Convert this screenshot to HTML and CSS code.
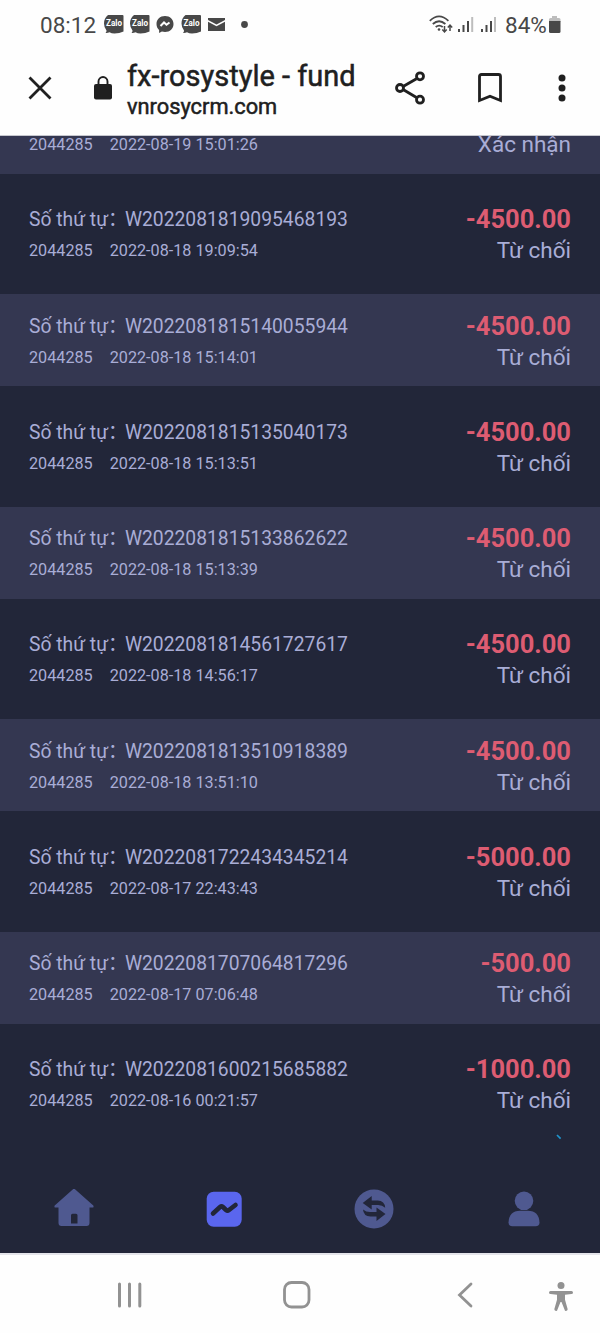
FILE: index.html
```
<!DOCTYPE html>
<html lang="vi">
  <head>
    <meta charset="UTF-8" />
    <meta name="viewport" content="width=device-width, initial-scale=1.0" />
    <title>fx-rosystyle - fund</title>
    <link rel="stylesheet" href="styles.css">
  </head>
  <body>
    <header>
      <div class="status-bar">
        <span class="clock">08:12</span>
        <svg class="notices" width="146" height="22" viewBox="0 0 146 22">
          <defs>
            <g id="zalo">
              <path d="M4 1h14.500q1 0 1 1v15.500q-4 2-9 2-3 0-5-1.200-2 1-4 .7 1.200-1.200 1-2.500Q0 13.500 0 9.500 0 4 4 1z" fill="#484848" />
              <text x="10" y="12.300" text-anchor="middle" textLength="16" lengthAdjust="spacingAndGlyphs">Zalo</text>
            </g>
          </defs>
          <use href="#zalo" x="0" y="0" />
          <use href="#zalo" x="26" y="0" />
          <path d="M61 2c-5 0-8.500 3.500-8.500 8 0 2.500 1 4.500 2.600 6v3l2.800-1.400c1 .3 2 .4 3.100.4 5 0 8.500-3.500 8.500-8s-3.500-8-8.500-8z" fill="#484848" />
          <path d="M56.500 12l3.500-3.500 2.500 2.300 3-2.300" fill="none" stroke="#fff" stroke-width="2" />
          <use href="#zalo" x="77.500" y="0" />
          <path d="M104 4h17v2l-8.500 4.500L104 6z" fill="#484848" />
          <path d="M104 7.800l8.500 4.400 8.500-4.400V17h-17z" fill="#484848" />
          <circle cx="140.500" cy="10.500" r="3.400" fill="#484848" />
        </svg>
        <svg class="signal" width="68" height="22" viewBox="0 0 68 22">
          <g fill="none" stroke="#484848" stroke-width="1.800">
            <path d="M.8 6.800q9.200-8.800 18.600 0" />
            <path d="M3.800 10q6.200-5.600 12.600 0" />
            <path d="M6.700 13q3.400-2.800 7 0" />
            <path d="M15.500 12v6M13.300 15.600l2.200 2.400 2.200-2.400M21 17v-6M18.800 13.400L21 11l2.200 2.400" stroke-width="1.500" />
          </g>
          <circle cx="10" cy="15.500" r="1.300" fill="#484848" />
          <path d="M29 15h2v3h-2zM33.500 11h2v7h-2zM38 7h2v11h-2zM52 15h2v3h-2zM56.500 11h2v7h-2zM61 7h2v11h-2z" fill="#484848" />
          <path d="M42.200 3h2v15h-2zM65 3h2v15h-2z" fill="#bdbdbd" />
        </svg>
        <span class="battery">84%</span>
        <svg width="12" height="18" viewBox="0 0 12 18">
          <path d="M3 0h5v2h2q1.500 0 1.500 1.500V6H0V3.500Q0 2 1.500 2H3z" fill="#bdbdbd" />
          <path d="M0 5h11.500v10.500Q11.500 17 10 17H1.500Q0 17 0 15.500z" fill="#484848" />
        </svg>
      </div>

      <div class="address-bar">
        <svg class="close" width="24" height="24" viewBox="0 0 24 24">
          <path d="M1.500 1.500l21 21M22.500 1.500l-21 21" stroke="#202020" stroke-width="2.800" />
        </svg>
        <svg class="lock" width="18" height="24" viewBox="0 0 18 24">
          <rect x="0" y="8" width="18" height="15.500" rx="2" fill="#202020" />
          <path d="M4.500 9V5.500a4.500 4.500 0 0 1 9 0V9" fill="none" stroke="#202020" stroke-width="1.900" />
        </svg>
        <div class="page-info">
          <div class="page-title">fx-rosystyle - fund</div>
          <div class="page-host">vnrosycrm.com</div>
        </div>
        <svg class="share" width="32" height="34" viewBox="0 0 32 34">
          <g fill="none" stroke="#202020" stroke-width="2.800">
            <path d="M8.500 15.300L21.500 7.700M8.500 18.700l13 7.800" />
            <circle cx="5" cy="17" r="3.500" />
            <circle cx="25" cy="5.300" r="3.500" />
            <circle cx="25" cy="28.700" r="3.500" />
          </g>
        </svg>
        <svg class="bookmark" width="24" height="30" viewBox="0 0 24 30">
          <path d="M1.500 27.500V3.500q0-2 2-2h17q2 0 2 2v24L12 23.300z" fill="none" stroke="#202020" stroke-width="2.800" />
        </svg>
        <svg class="more" width="8" height="28" viewBox="0 0 8 28">
          <g fill="#202020">
            <circle cx="4" cy="4" r="3.500" />
            <circle cx="4" cy="14" r="3.500" />
            <circle cx="4" cy="24" r="3.500" />
          </g>
        </svg>
      </div>
    </header>

    <main>
      <div class="record cut">
        <div class="meta"><span>2044285</span><span>2022-08-19 15:01:26</span></div>
        <div class="status">Xác nhận</div>
      </div>
      <div class="record">
        <div class="order"><span>Số thứ tự：</span><span>W2022081819095468193</span></div>
        <div class="amount">-4500.00</div>
        <div class="meta"><span>2044285</span><span>2022-08-18 19:09:54</span></div>
        <div class="status">Từ chối</div>
      </div>
      <div class="record">
        <div class="order"><span>Số thứ tự：</span><span>W2022081815140055944</span></div>
        <div class="amount">-4500.00</div>
        <div class="meta"><span>2044285</span><span>2022-08-18 15:14:01</span></div>
        <div class="status">Từ chối</div>
      </div>
      <div class="record">
        <div class="order"><span>Số thứ tự：</span><span>W2022081815135040173</span></div>
        <div class="amount">-4500.00</div>
        <div class="meta"><span>2044285</span><span>2022-08-18 15:13:51</span></div>
        <div class="status">Từ chối</div>
      </div>
      <div class="record">
        <div class="order"><span>Số thứ tự：</span><span>W2022081815133862622</span></div>
        <div class="amount">-4500.00</div>
        <div class="meta"><span>2044285</span><span>2022-08-18 15:13:39</span></div>
        <div class="status">Từ chối</div>
      </div>
      <div class="record">
        <div class="order"><span>Số thứ tự：</span><span>W2022081814561727617</span></div>
        <div class="amount">-4500.00</div>
        <div class="meta"><span>2044285</span><span>2022-08-18 14:56:17</span></div>
        <div class="status">Từ chối</div>
      </div>
      <div class="record">
        <div class="order"><span>Số thứ tự：</span><span>W2022081813510918389</span></div>
        <div class="amount">-4500.00</div>
        <div class="meta"><span>2044285</span><span>2022-08-18 13:51:10</span></div>
        <div class="status">Từ chối</div>
      </div>
      <div class="record">
        <div class="order"><span>Số thứ tự：</span><span>W2022081722434345214</span></div>
        <div class="amount">-5000.00</div>
        <div class="meta"><span>2044285</span><span>2022-08-17 22:43:43</span></div>
        <div class="status">Từ chối</div>
      </div>
      <div class="record">
        <div class="order"><span>Số thứ tự：</span><span>W2022081707064817296</span></div>
        <div class="amount">-500.00</div>
        <div class="meta"><span>2044285</span><span>2022-08-17 07:06:48</span></div>
        <div class="status">Từ chối</div>
      </div>
      <div class="record">
        <div class="order"><span>Số thứ tự：</span><span>W2022081600215685882</span></div>
        <div class="amount">-1000.00</div>
        <div class="meta"><span>2044285</span><span>2022-08-16 00:21:57</span></div>
        <div class="status">Từ chối</div>
      </div>
      <svg class="spinner" width="6" height="6" viewBox="0 0 6 6">
        <path d="M1 1l3.600 3.600" stroke="#1f93cc" stroke-width="1.700" />
      </svg>
    </main>

    <nav class="tabs">
      <a href="#home">
        <svg width="40" height="40" viewBox="0 0 40 40">
          <path d="M19 .2q1-.8 2 0L39.300 16.600q.9 2-1 2H35.500V34q0 3-3 3h-25q-3 0-3-3V18.600H1.700q-1.900 0-1-2zM18.500 24.700q-1.500 0-1.500 1.500V34.500h6.500v-8.300q0-1.500-1.500-1.500z" fill="#4f5990" fill-rule="evenodd" />
        </svg>
      </a>
      <a href="#trade">
        <svg width="40" height="40" viewBox="0 0 40 40">
          <rect x="2.700" y="2.700" width="35" height="35" rx="7" fill="#5a66ee" />
          <path d="M9 24.500l7-6.500q1.500-1.200 3 0l3 3q1.500 1.200 3 0l6.500-5" fill="none" stroke="#222639" stroke-width="4.600" stroke-linecap="round" />
        </svg>
      </a>
      <a href="#fund">
        <svg width="40" height="40" viewBox="0 0 40 40">
          <circle cx="20" cy="20" r="19.500" fill="#4f5990" />
          <path d="M8.700 14l9-7v4.500h6q7 .2 7.500 7.300-3-2.800-7-2.800h-6.500v4.500zM31.500 25l-9 7v-4.500h-6q-7-.2-7.500-7 3 2.500 7 2.500h6.500v-4.500z" fill="#222639" />
        </svg>
      </a>
      <a href="#profile">
        <svg width="40" height="40" viewBox="0 0 40 40">
          <circle cx="20" cy="11.800" r="9.300" fill="#4f5990" />
          <path d="M4.500 33.500Q5 22 16 21.700h8Q35 22 35.500 33.500q0 3.800-4 3.800h-23q-4 0-4-3.800z" fill="#4f5990" />
        </svg>
      </a>
    </nav>

    <footer>
      <svg class="recents" width="26" height="26" viewBox="0 0 26 26">
        <path d="M2.500 2v22M12.500 2v22M22.800 2v22" stroke="#929292" stroke-width="3" stroke-linecap="round" />
      </svg>
      <svg class="home" width="28" height="28" viewBox="0 0 28 28">
        <rect x="1.500" y="1.500" width="24.500" height="24.500" rx="7" fill="none" stroke="#929292" stroke-width="2.800" />
      </svg>
      <svg class="back" width="16" height="26" viewBox="0 0 16 26">
        <path d="M14 2L2.500 13 14 24" fill="none" stroke="#929292" stroke-width="2.800" stroke-linecap="round" />
      </svg>
      <svg class="access" width="24" height="30" viewBox="0 0 24 30">
        <circle cx="12" cy="3.600" r="3.500" fill="#929292" />
        <path d="M1.500 9h21a1.400 1.400 0 0 1 0 3l-6.500.8v5l2.700 9.500q-.3 2-2.700 1.500L12.500 20h-1L8 28.800q-2.400.5-2.700-1.500L8 17.800v-5L1.500 12a1.400 1.400 0 0 1 0-3z" fill="#929292" />
      </svg>
    </footer>
  </body>
</html>
```
FILE: styles.css
```
body {
  margin: 0;
  height: 1333px;
  font-family: Roboto, 'Noto Sans CJK SC', sans-serif;
  background-color: #222639;
  color: #a9add6;
  display: flex;
  flex-direction: column;
  overflow: hidden;
}
svg {
  display: block;
  flex-shrink: 0;
}
header {
  height: 136px;
  box-sizing: border-box;
  background-color: #fefefe;
  border-bottom: 1px solid #c6c7ce;
  flex-shrink: 0;
}
.status-bar {
  height: 50px;
  display: flex;
  align-items: center;
  padding: 0 39px 0 40px;
  color: #484848;
  font-size: 22.500px;
}
.clock {
  width: 64px;
}
.notices text {
  font-size: 8.500px;
  font-weight: bold;
  fill: #fff;
}
.signal {
  margin-left: auto;
}
.battery {
  width: 43px;
  margin-left: 8px;
  margin-right: 1px;
}
.address-bar {
  height: 76px;
  display: flex;
  align-items: center;
  padding: 0 34px 0 28px;
  color: #202020;
}
.lock {
  margin-left: 42px;
}
.page-info {
  width: 240px;
  margin-left: 15px;
  padding-top: 3px;
  white-space: nowrap;
  -webkit-text-stroke: 0.500px #202020;
}
.page-title {
  font-size: 29px;
  line-height: 34px;
}
.page-host {
  font-size: 21.800px;
  line-height: 28px;
}
.share {
  margin-left: 28px;
}
.bookmark {
  margin-left: 51px;
}
.more {
  margin-left: auto;
}
main {
  height: 1020px;
  display: flex;
  flex-direction: column;
  gap: 14.250px;
  position: relative;
  flex-shrink: 0;
}
.record {
  height: 92px;
  box-sizing: border-box;
  padding: 15.500px 29px 0;
  display: grid;
  grid-template-columns: 1fr auto;
  grid-template-rows: 32px 31px;
  align-items: center;
  white-space: nowrap;
  flex-shrink: 0;
}
.record:nth-child(odd) {
  background-color: #343751;
}
.record.cut {
  height: 37.500px;
  padding-top: 0;
  grid-template-rows: 17px;
}
.order {
  font-size: 19.300px;
  line-height: 30px;
  padding-top: 2px;
}
.order span + span {
  margin-left: -2.500px;
}
.meta {
  font-size: 16.200px;
  display: flex;
  gap: 17px;
}
.amount {
  font-size: 25.500px;
  font-weight: bold;
  color: #dd5c72;
  text-align: right;
}
.status {
  font-size: 22.500px;
  line-height: 26px;
  padding-bottom: 1px;
  text-align: right;
}
.spinner {
  position: absolute;
  left: 556px;
  top: 998px;
}
.tabs {
  height: 97px;
  display: flex;
  align-items: flex-end;
  flex-shrink: 0;
}
.tabs a {
  width: 150px;
  height: 88px;
  box-sizing: border-box;
  padding-right: 2px;
  display: flex;
  align-items: center;
  justify-content: center;
}
footer {
  height: 80px;
  box-sizing: border-box;
  border-top: 2px solid #e4e4ea;
  background-color: #fefefe;
  display: flex;
  align-items: center;
  padding: 1px 27px 0 117px;
  flex-shrink: 0;
}
.home {
  margin-left: 140px;
}
.back {
  margin-left: 146px;
}
.access {
  margin-left: auto;
  margin-top: 4px;
}
```
